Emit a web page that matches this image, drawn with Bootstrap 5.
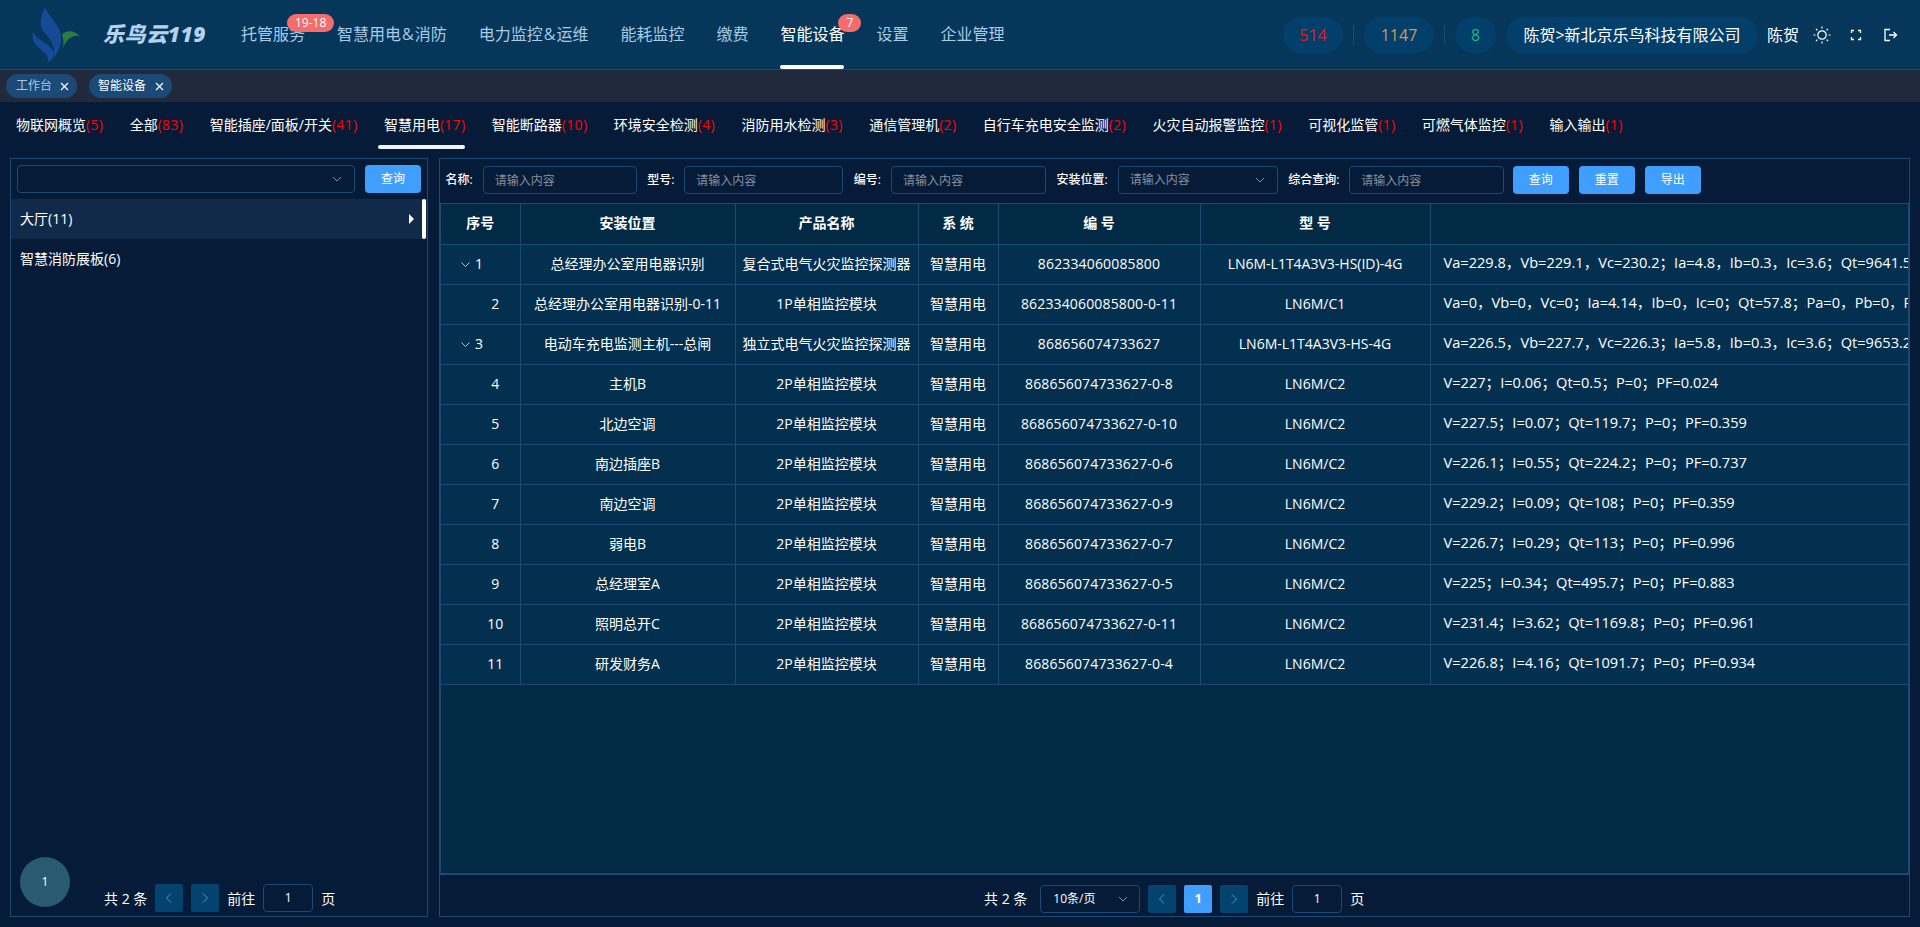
<!DOCTYPE html>
<html lang="zh-CN">
<head>
  <meta charset="UTF-8">
  <title>乐鸟云119 - 智能设备</title>
  <link href="https://cdn.jsdelivr.net/npm/bootstrap@5.3.3/dist/css/bootstrap.min.css" rel="stylesheet">
  <style>
    html, body { height: 100%; }
    body {
      background-color: #061b38;
      color: #fff;
      font-family: "Open Sans", "Noto Sans CJK SC", sans-serif;
      font-size: 14px;
      overflow: hidden;
    }
    .app-shell { height: 927px; }

    /* top bar */
    .top-bar {
      height: 70px;
      background-color: #06375a;
      border-bottom: 1px solid #1d4a75;
      padding-right: 20px;
    }
    .logo-box { width: 241px; padding-left: 30px; }
    .logo-text {
      color: #b5d2f0;
      font-size: 21px;
      font-weight: 800;
      font-style: italic;
      letter-spacing: .6px;
      margin-left: 21px;
      white-space: nowrap;
    }
    .main-nav { gap: 32px; height: 69px; }
    .main-link {
      color: #a9cbe6;
      font-size: 16px;
      line-height: 69px;
      position: relative;
      text-decoration: none;
      white-space: nowrap;
    }
    .main-link.is-on { color: #fff; }
    .main-link.is-on::after {
      content: "";
      position: absolute;
      left: 0; right: 0; bottom: 0;
      height: 4px;
      border-radius: 2px;
      background: #fff;
    }
    .amp-mark { margin: 0 1px; }
    .num-badge {
      position: absolute;
      top: 14px;
      height: 18px;
      line-height: 18px;
      padding: 0 8px;
      border-radius: 9px;
      background: #f56c6c;
      color: #fff;
      font-size: 12px;
    }
    .stat-pill {
      height: 36px;
      line-height: 36px;
      border-radius: 18px;
      background: #023f6b;
      font-size: 16px;
      text-align: center;
      white-space: nowrap;
    }
    .stat-sep { width: 1px; height: 20px; background: #1d4a75; margin: 0 10px; }
    .company-pill { width: 252px; margin: 0 9px 0 10px; }
    .head-icon { width: 20px; height: 20px; color: #fff; flex: none; }

    /* open page tabs */
    .page-tabs { height: 32px; background: #212a3c; padding-left: 6px; gap: 12px; }
    .page-chip {
      height: 24px;
      border-radius: 12px;
      background: #1c4a77;
      color: #a9cbe6;
      font-size: 12px;
      padding: 0 8px 0 10px;
      gap: 8px;
    }
    .page-chip.is-on { color: #fff; padding-left: 9px; gap: 9px; }

    /* device type tabs */
    .type-tabs { height: 56px; padding: 0 0 0 16px; gap: 26.5px; }
    .type-link {
      color: #fff;
      line-height: 46px;
      height: 46px;
      position: relative;
      text-decoration: none;
      white-space: nowrap;
      font-size: 14px;
    }
    .type-link em { color: #f00; font-style: normal; letter-spacing: .3px; }
    .type-link.is-on::after {
      content: "";
      position: absolute;
      left: -6px; right: 0; bottom: -1px;
      height: 4px;
      border-radius: 2px;
      background: #f0f4f8;
    }

    /* panels */
    .work-area { height: 759px; padding: 0 10px 0 10px; gap: 11px; }
    .side-panel { width: 418px; flex: none; border: 1px solid #1d4a75; position: relative; }
    .list-panel { flex: 1 1 auto; min-width: 0; border: 1px solid #1d4a75; }
    .dark-input {
      height: 28px;
      background: #061b38;
      border: 1px solid #1d4a75;
      border-radius: 4px;
      color: #fff;
      font-size: 12px;
      padding: 0 11px;
      position: relative;
      box-shadow: none;
    }
    .dark-input::placeholder { color: #8590a0; opacity: 1; }
    .dark-input:focus { background: #061b38; color: #fff; border-color: #1d4a75; box-shadow: none; }
    .pick-box { display: flex; align-items: center; justify-content: space-between; color: #8590a0; }
    .btn-query {
      width: 56px;
      height: 28px;
      padding: 0;
      border: 0;
      border-radius: 4px;
      background: #409eff;
      color: #fff;
      font-size: 12px;
      flex: none;
    }
    .btn-query:hover { background: #409eff; color: #fff; }
    .btn-row { column-gap: 10px; margin-left: -2px; }
    .chev { width: 12px; height: 12px; color: #8794a6; flex: none; }

    .side-search { height: 40px; padding: 0 6px; gap: 10px; }
    .tree-row { height: 40px; padding: 0 0 2px 9px; font-size: 14px; position: relative; }
    .tree-row.is-on { background: #122a4a; }
    .tree-row.is-on::after {
      content: "";
      position: absolute;
      right: 1px; top: 0; bottom: 0;
      width: 4px;
      border-radius: 2px;
      background: #fff;
    }
    .tree-arrow {
      position: absolute;
      right: 13px; top: 15px;
      width: 0; height: 0;
      border-left: 5px solid #fff;
      border-top: 5px solid transparent;
      border-bottom: 5px solid transparent;
    }
    .float-dot {
      position: absolute;
      left: 9px; bottom: 9px;
      width: 50px; height: 50px;
      border-radius: 50%;
      background: #2a5a70;
      font-size: 12px;
    }
    .pager { gap: 8px; font-size: 14px; }
    .side-pager { height: 40px; padding: 4px 0 0 93px; }
    .list-pager { padding: 6px 0 0 544px; }
    .pager-btn {
      width: 28px; height: 28px;
      background: #02446f;
      border-radius: 2px;
      color: #6f8aa3;
      flex: none;
    }
    .pager-btn.is-on { background: #409eff; color: #fff; font-weight: 700; font-size: 13px; }
    .pager-num {
      width: 50px; height: 28px;
      border: 1px solid #1d4a75;
      border-radius: 4px;
      font-size: 12px;
    }
    .pager-size {
      width: 100px; height: 28px;
      border: 1px solid #1d4a75;
      border-radius: 4px;
      font-size: 12px;
      padding: 0 10px 0 12px;
      margin-left: 1px;
    }

    /* filters */
    .filter-bar { height: 44px; padding: 0 0 2px 5.5px; gap: 10.5px; }
    .filter-label { font-size: 12px; font-weight: 500; white-space: nowrap; margin-right: 10px; }

    /* table */
    .table-wrap {
      height: 672px;
      background: #022a45;
      border: 1px solid #1d4a75;
      border-bottom-width: 2px;
      overflow: hidden;
    }
    .device-table {
      table-layout: fixed;
      width: 100%;
      margin: 0;
      --bs-table-bg: transparent;
      --bs-table-color: #fff;
      border-color: #1d4a75;
      font-size: 14px;
    }
    .device-table th, .device-table td {
      height: 40px;
      padding: 0 0 2px;
      text-align: center;
      vertical-align: middle;
      white-space: nowrap;
      overflow: hidden;
      border: 0;
      border-right: 1px solid #1d4a75;
      border-bottom: 1px solid #1d4a75;
      color: #fff;
    }
    .device-table th:last-child, .device-table td:last-child { border-right: 0; }
    .device-table thead th { background: #032a45; font-weight: 700; font-size: 14px; }
    .device-table tbody td { background: #03304f; }
    .device-table tbody td:nth-child(5) { letter-spacing: .15px; }
    .device-table td.idx-cell { padding-left: 30px; }
    .device-table td.idx-open { padding-left: 20px; text-align: left; }
    .device-table td.data-cell { text-align: left; padding-left: 13px; font-size: 14.6px; }
    .idx-open svg { width: 9px; height: 9px; margin-right: 5px; vertical-align: 0; color: #b5c4d4; }
  </style>
</head>
<body>

<div class="app-shell d-flex flex-column">

  <!-- top bar -->
  <header class="top-bar d-flex align-items-center">
    <div class="logo-box d-flex align-items-center">
      <svg width="52" height="54" viewBox="0 0 52 54">
        <path d="M15 0C20 10 30 17 31 28C32 36 28 44 24 50C26 38 20 30 14 24C9 18 10 8 15 0Z" fill="#154a97"/>
        <path d="M3 24C6 31 20 36 24 44C25 48 22 52 18 54C19 46 12 43 7 38C3 34 2 29 3 24Z" fill="#154a97"/>
        <path d="M32 26C37 22 44 22 50 28C43 27 37 30 33 40C34 35 33 30 32 26Z" fill="#2f7a3e"/>
      </svg>
      <span class="logo-text">乐鸟云119</span>
    </div>
    <nav class="main-nav nav flex-nowrap">
      <a class="main-link" href="#">托管服务<span class="num-badge" style="left:46px">19-18</span></a>
      <a class="main-link" href="#">智慧用电<span class="amp-mark">&amp;</span>消防</a>
      <a class="main-link" href="#">电力监控<span class="amp-mark">&amp;</span>运维</a>
      <a class="main-link" href="#">能耗监控</a>
      <a class="main-link" href="#">缴费</a>
      <a class="main-link is-on" href="#">智能设备<span class="num-badge" style="left:58px">7</span></a>
      <a class="main-link" href="#">设置</a>
      <a class="main-link" href="#">企业管理</a>
    </nav>
    <div class="ms-auto d-flex align-items-center">
      <div class="stat-pill" style="width:60px;color:#f01414">514</div>
      <div class="stat-sep"></div>
      <div class="stat-pill" style="width:70px;color:#cf9a5a">1147</div>
      <div class="stat-sep"></div>
      <div class="stat-pill" style="width:41px;color:#1db58d">8</div>
      <div class="stat-pill company-pill">陈贺&gt;新北京乐鸟科技有限公司</div>
      <span style="font-size:16px">陈贺</span>
      <svg class="head-icon" style="margin-left:13px" viewBox="0 0 20 20" fill="none" stroke="currentColor" stroke-width="1.2">
        <circle cx="10" cy="10" r="4.2"/>
        <path d="M10 1.5v2M10 16.5v2M1.5 10h2M16.5 10h2M4 4l1.4 1.4M14.6 14.6L16 16M16 4l-1.4 1.4M5.4 14.6L4 16"/>
      </svg>
      <svg class="head-icon" style="margin-left:14px" viewBox="0 0 20 20" fill="none" stroke="currentColor" stroke-width="1.3">
        <path d="M5.5 8V5.5H8M12 5.5h2.5V8M14.5 12v2.5H12M8 14.5H5.5V12"/>
      </svg>
      <svg class="head-icon" style="margin-left:14px" viewBox="0 0 20 20" fill="none" stroke="currentColor" stroke-width="1.3">
        <path d="M10 4.5H5v11h5M9 10h7.5M13.5 7l3 3-3 3"/>
      </svg>
    </div>
  </header>

  <!-- open tabs -->
  <div class="page-tabs d-flex align-items-center">
    <div class="page-chip d-flex align-items-center">工作台
      <svg width="9" height="9" viewBox="0 0 9 9" stroke="#fff" stroke-width="1.2"><path d="M1 1l7 7M8 1l-7 7"/></svg>
    </div>
    <div class="page-chip is-on d-flex align-items-center">智能设备
      <svg width="9" height="9" viewBox="0 0 9 9" stroke="#fff" stroke-width="1.2"><path d="M1 1l7 7M8 1l-7 7"/></svg>
    </div>
  </div>

  <!-- device types -->
  <nav class="type-tabs nav flex-nowrap align-items-start">
    <a class="type-link" href="#">物联网概览<em>(5)</em></a>
    <a class="type-link" href="#">全部<em>(83)</em></a>
    <a class="type-link" href="#">智能插座/面板/开关<em>(41)</em></a>
    <a class="type-link is-on" href="#">智慧用电<em>(17)</em></a>
    <a class="type-link" href="#">智能断路器<em>(10)</em></a>
    <a class="type-link" href="#">环境安全检测<em>(4)</em></a>
    <a class="type-link" href="#">消防用水检测<em>(3)</em></a>
    <a class="type-link" href="#">通信管理机<em>(2)</em></a>
    <a class="type-link" href="#">自行车充电安全监测<em>(2)</em></a>
    <a class="type-link" href="#">火灾自动报警监控<em>(1)</em></a>
    <a class="type-link" href="#">可视化监管<em>(1)</em></a>
    <a class="type-link" href="#">可燃气体监控<em>(1)</em></a>
    <a class="type-link" href="#">输入输出<em>(1)</em></a>
  </nav>

  <!-- panels -->
  <main class="work-area d-flex">
    <aside class="side-panel d-flex flex-column">
      <div class="side-search d-flex align-items-center">
        <div class="dark-input pick-box" style="width:338px">
          <span></span>
          <svg class="chev" viewBox="0 0 12 12" fill="none" stroke="currentColor"><path d="M2 4l4 4 4-4"/></svg>
        </div>
        <button class="btn btn-query" type="button">查询</button>
      </div>
      <div class="tree-row is-on d-flex align-items-center">大厅(11)<span class="tree-arrow"></span></div>
      <div class="tree-row d-flex align-items-center">智慧消防展板(6)</div>
      <div class="flex-grow-1"></div>
      <div class="float-dot d-flex align-items-center justify-content-center">1</div>
      <div class="pager side-pager d-flex align-items-center">
        <span>共 2 条</span>
        <span class="pager-btn d-flex align-items-center justify-content-center"><svg width="12" height="12" viewBox="0 0 12 12" fill="none" stroke="currentColor"><path d="M8 1.5L3.5 6 8 10.5"/></svg></span>
        <span class="pager-btn d-flex align-items-center justify-content-center"><svg width="12" height="12" viewBox="0 0 12 12" fill="none" stroke="currentColor"><path d="M4 1.5L8.5 6 4 10.5"/></svg></span>
        <span>前往</span>
        <span class="pager-num d-flex align-items-center justify-content-center">1</span>
        <span>页</span>
      </div>
    </aside>

    <section class="list-panel d-flex flex-column">
      <div class="filter-bar d-flex align-items-center">
        <div class="d-flex align-items-center">
          <span class="filter-label">名称:</span>
          <input class="form-control dark-input" style="width:154px" placeholder="请输入内容">
        </div>
        <div class="d-flex align-items-center">
          <span class="filter-label">型号:</span>
          <input class="form-control dark-input" style="width:159px" placeholder="请输入内容">
        </div>
        <div class="d-flex align-items-center">
          <span class="filter-label">编号:</span>
          <input class="form-control dark-input" style="width:155px" placeholder="请输入内容">
        </div>
        <div class="d-flex align-items-center">
          <span class="filter-label">安装位置:</span>
          <div class="dark-input pick-box" style="width:160px">
            <span>请输入内容</span>
            <svg class="chev" viewBox="0 0 12 12" fill="none" stroke="currentColor"><path d="M2 4l4 4 4-4"/></svg>
          </div>
        </div>
        <div class="d-flex align-items-center">
          <span class="filter-label">综合查询:</span>
          <input class="form-control dark-input" style="width:155px" placeholder="请输入内容">
        </div>
        <div class="btn-row d-flex">
          <button class="btn btn-query" type="button">查询</button>
          <button class="btn btn-query" type="button">重置</button>
          <button class="btn btn-query" type="button">导出</button>
        </div>
      </div>

      <div class="table-wrap">
        <table class="table device-table">
          <colgroup>
            <col style="width:79px"><col style="width:215px"><col style="width:183px">
            <col style="width:80px"><col style="width:202px"><col style="width:230px"><col>
          </colgroup>
          <thead>
            <tr><th>序号</th><th>安装位置</th><th>产品名称</th><th>系 统</th><th>编 号</th><th>型 号</th><th></th></tr>
          </thead>
          <tbody>
            <tr>
              <td class="idx-open"><svg viewBox="0 0 9 9" fill="none" stroke="currentColor"><path d="M.5 2.5L4.5 6.5 8.5 2.5"/></svg>1</td>
              <td>总经理办公室用电器识别</td><td>复合式电气火灾监控探测器</td><td>智慧用电</td><td>862334060085800</td><td>LN6M-L1T4A3V3-HS(ID)-4G</td>
              <td class="data-cell">Va=229.8，Vb=229.1，Vc=230.2；Ia=4.8，Ib=0.3，Ic=3.6；Qt=9641.5；Pa=0，Pb=0，Pc=0</td>
            </tr>
            <tr>
              <td class="idx-cell">2</td>
              <td>总经理办公室用电器识别-0-11</td><td>1P单相监控模块</td><td>智慧用电</td><td>862334060085800-0-11</td><td>LN6M/C1</td>
              <td class="data-cell">Va=0，Vb=0，Vc=0；Ia=4.14，Ib=0，Ic=0；Qt=57.8；Pa=0，Pb=0，Pc=0；PF=0</td>
            </tr>
            <tr>
              <td class="idx-open"><svg viewBox="0 0 9 9" fill="none" stroke="currentColor"><path d="M.5 2.5L4.5 6.5 8.5 2.5"/></svg>3</td>
              <td>电动车充电监测主机---总闸</td><td>独立式电气火灾监控探测器</td><td>智慧用电</td><td>868656074733627</td><td>LN6M-L1T4A3V3-HS-4G</td>
              <td class="data-cell">Va=226.5，Vb=227.7，Vc=226.3；Ia=5.8，Ib=0.3，Ic=3.6；Qt=9653.2；Pa=0，Pb=0，Pc=0</td>
            </tr>
            <tr><td class="idx-cell">4</td><td>主机B</td><td>2P单相监控模块</td><td>智慧用电</td><td>868656074733627-0-8</td><td>LN6M/C2</td><td class="data-cell">V=227；I=0.06；Qt=0.5；P=0；PF=0.024</td></tr>
            <tr><td class="idx-cell">5</td><td>北边空调</td><td>2P单相监控模块</td><td>智慧用电</td><td>868656074733627-0-10</td><td>LN6M/C2</td><td class="data-cell">V=227.5；I=0.07；Qt=119.7；P=0；PF=0.359</td></tr>
            <tr><td class="idx-cell">6</td><td>南边插座B</td><td>2P单相监控模块</td><td>智慧用电</td><td>868656074733627-0-6</td><td>LN6M/C2</td><td class="data-cell">V=226.1；I=0.55；Qt=224.2；P=0；PF=0.737</td></tr>
            <tr><td class="idx-cell">7</td><td>南边空调</td><td>2P单相监控模块</td><td>智慧用电</td><td>868656074733627-0-9</td><td>LN6M/C2</td><td class="data-cell">V=229.2；I=0.09；Qt=108；P=0；PF=0.359</td></tr>
            <tr><td class="idx-cell">8</td><td>弱电B</td><td>2P单相监控模块</td><td>智慧用电</td><td>868656074733627-0-7</td><td>LN6M/C2</td><td class="data-cell">V=226.7；I=0.29；Qt=113；P=0；PF=0.996</td></tr>
            <tr><td class="idx-cell">9</td><td>总经理室A</td><td>2P单相监控模块</td><td>智慧用电</td><td>868656074733627-0-5</td><td>LN6M/C2</td><td class="data-cell">V=225；I=0.34；Qt=495.7；P=0；PF=0.883</td></tr>
            <tr><td class="idx-cell">10</td><td>照明总开C</td><td>2P单相监控模块</td><td>智慧用电</td><td>868656074733627-0-11</td><td>LN6M/C2</td><td class="data-cell">V=231.4；I=3.62；Qt=1169.8；P=0；PF=0.961</td></tr>
            <tr><td class="idx-cell">11</td><td>研发财务A</td><td>2P单相监控模块</td><td>智慧用电</td><td>868656074733627-0-4</td><td>LN6M/C2</td><td class="data-cell">V=226.8；I=4.16；Qt=1091.7；P=0；PF=0.934</td></tr>
          </tbody>
        </table>
      </div>

      <div class="pager list-pager d-flex align-items-center flex-grow-1">
        <span class="me-1">共 2 条</span>
        <div class="pager-size d-flex align-items-center justify-content-between">10条/页
          <svg class="chev" viewBox="0 0 12 12" fill="none" stroke="currentColor"><path d="M2 4l4 4 4-4"/></svg>
        </div>
        <span class="pager-btn d-flex align-items-center justify-content-center"><svg width="12" height="12" viewBox="0 0 12 12" fill="none" stroke="currentColor"><path d="M8 1.5L3.5 6 8 10.5"/></svg></span>
        <span class="pager-btn is-on d-flex align-items-center justify-content-center">1</span>
        <span class="pager-btn d-flex align-items-center justify-content-center"><svg width="12" height="12" viewBox="0 0 12 12" fill="none" stroke="currentColor"><path d="M4 1.5L8.5 6 4 10.5"/></svg></span>
        <span>前往</span>
        <span class="pager-num d-flex align-items-center justify-content-center">1</span>
        <span>页</span>
      </div>
    </section>
  </main>
</div>

<script src="https://cdn.jsdelivr.net/npm/bootstrap@5.3.3/dist/js/bootstrap.bundle.min.js"></script>
</body>
</html>
